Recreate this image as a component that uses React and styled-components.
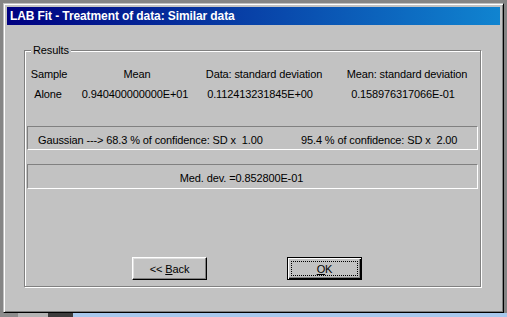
import React from 'react';
import styled, { createGlobalStyle } from 'styled-components';

const GlobalStyle = createGlobalStyle`
  html, body {
    margin: 0;
    padding: 0;
    background: #808080;
  }
  body {
    font-family: "Liberation Sans", Arial, sans-serif;
  }
`;

const face = `
  background-color: #c2c2c2;
`;

const Desktop = styled.div`
  width: 507px;
  height: 317px;
  overflow: hidden;
  padding: 3px 0 0 3px;
  box-sizing: border-box;
  background:
    linear-gradient(to right, #8c8c8c 0 18px, #b4b4b4 18px 48px, #3c3c3c 48px 73px, #a8c8ec 73px)
      left bottom / 100% 4px no-repeat,
    #858585;
`;

const Window = styled.div`
  width: 501px;
  height: 310px;
  box-sizing: border-box;
  padding: 2px;
  border: 1px solid;
  border-color: #c0c0c0 #000 #000 #c0c0c0;
  box-shadow: inset 1px 1px 0 #fff, inset -1px -1px 0 #808080;
  display: flex;
  flex-direction: column;
  ${face}
`;

const TitleBar = styled.div`
  margin: 1px 1px 0 1px;
  height: 18px;
  display: flex;
  align-items: center;
  padding-left: 3px;
  background: linear-gradient(to right, #000080, #1084d0);
  color: #fff;
  font-weight: bold;
  font-size: 12px;
  letter-spacing: -0.1px;
`;

const Body = styled.div`
  flex: 1;
  padding: 25px 20px 0 18px;
`;

const Group = styled.div`
  position: relative;
  height: 237px;
  box-sizing: border-box;
  border: 1px solid #808080;
  box-shadow: 1px 1px 0 #fff, inset 1px 1px 0 #fff;
  padding: 16px 2px 6px 2px;
  display: flex;
  flex-direction: column;
  font-size: 11px;
  letter-spacing: -0.12px;
  color: #000;
`;

const Legend = styled.span`
  position: absolute;
  top: -7px;
  left: 6px;
  padding: 0 2px;
  line-height: 13px;
  background: #c2c2c2;
`;

const Table = styled.div`
  display: grid;
  grid-template-columns: 46px 128px 130px 148px;
  grid-auto-rows: 14px;
  row-gap: 6px;
  line-height: 14px;
  margin-left: -2px;
`;

const Cell = styled.div`
  text-align: center;
  white-space: nowrap;
  transform: translateX(${p => p.$shift || 0}px);
`;

const Sunken = styled.div`
  border: 1px solid;
  border-color: #808080 #fff #fff #808080;
  line-height: 14px;
  white-space: pre;
`;

const ConfBox = styled(Sunken)`
  margin-top: 25px;
  height: 24px;
  box-sizing: border-box;
  padding: 6px 0 0 10px;
  display: grid;
  grid-template-columns: 263px auto;
`;

const MedBox = styled(Sunken)`
  margin-top: 14px;
  height: 25px;
  box-sizing: border-box;
  padding: 6px 22px 0 0;
  text-align: center;
`;

const ButtonRow = styled.div`
  margin-top: auto;
  display: flex;
  gap: 80px;
  padding-left: 105px;
`;

const Button = styled.button`
  width: 75px;
  height: 23px;
  box-sizing: border-box;
  padding: 0;
  font-family: inherit;
  font-size: 11px;
  letter-spacing: -0.1px;
  color: #000;
  border: 1px solid;
  border-color: #fff #000 #000 #fff;
  box-shadow: inset -1px -1px 0 #808080, inset 1px 1px 0 #dfdfdf;
  ${face}
  display: flex;
  align-items: center;
  justify-content: center;
  u {
    text-decoration: underline;
    text-underline-offset: 1px;
  }
`;

const DefaultButton = styled(Button)`
  border: 1px solid #000;
  box-shadow: inset 1px 1px 0 #fff, inset -1px -1px 0 #000, inset -2px -2px 0 #808080;
  padding: 3px;
`;

const Focus = styled.span`
  flex: 1;
  align-self: stretch;
  display: flex;
  align-items: center;
  justify-content: center;
  border: 1px dotted #000;
`;

export default function App() {
  return (
    <>
      <GlobalStyle />
      <Desktop>
        <Window>
          <TitleBar>LAB Fit - Treatment of data: Similar data</TitleBar>
          <Body>
            <Group>
              <Legend>Results</Legend>
              <Table>
                <Cell $shift={1}>Sample</Cell>
                <Cell $shift={2}>Mean</Cell>
                <Cell>Data: standard deviation</Cell>
                <Cell $shift={4}>Mean: standard deviation</Cell>
                <Cell>Alone</Cell>
                <Cell>0.940400000000E+01</Cell>
                <Cell $shift={-4}>0.112413231845E+00</Cell>
                <Cell>0.158976317066E-01</Cell>
              </Table>
              <ConfBox>
                <span>Gaussian ---&gt; 68.3 % of confidence: SD x  1.00</span>
                <span>95.4 % of confidence: SD x  2.00</span>
              </ConfBox>
              <MedBox>Med. dev. =0.852800E-01</MedBox>
              <ButtonRow>
                <Button>
                  &lt;&lt;&nbsp;<u>B</u>ack
                </Button>
                <DefaultButton>
                  <Focus>
                    <u>O</u>K
                  </Focus>
                </DefaultButton>
              </ButtonRow>
            </Group>
          </Body>
        </Window>
      </Desktop>
    </>
  );
}
